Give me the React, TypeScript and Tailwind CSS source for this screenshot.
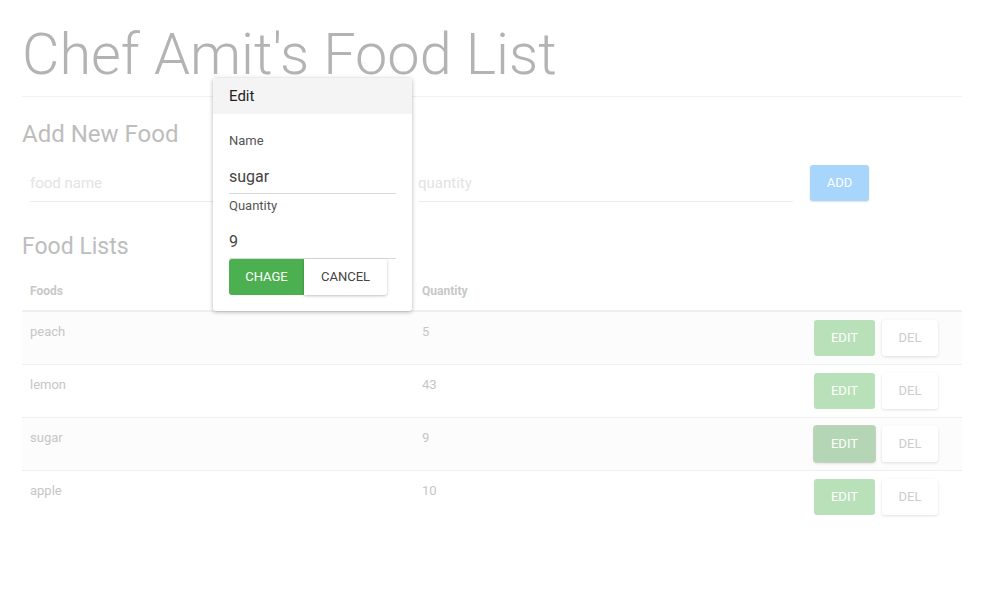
import React from "react";

const rows = [
  { name: "peach", qty: "5" },
  { name: "lemon", qty: "43" },
  { name: "sugar", qty: "9" },
  { name: "apple", qty: "10" },
];

export default function App() {
  return (
    <div className="relative w-[995px] h-[592px] bg-white overflow-hidden" style={{ fontFamily: "Roboto, 'Liberation Sans', sans-serif" }}>
      <div className="pl-[22px] w-[962px]">
        <h1 className="text-[57.6px] font-light text-[#b3b3b3] leading-none pt-[26px] pb-[12px] border-b border-[#f2f2f2]">Chef Amit's Food List</h1>
        <h2 className="text-[24px] text-[#bdbdbd] leading-none mt-[25px]">Add New Food</h2>
        <div className="flex items-end mt-[19px]">
          <div className="ml-[8px] w-[375px] h-[37px] border-b border-[#ececec] flex items-center pt-[1px] text-[15px] text-[#e3e3e3]">food name</div>
          <div className="ml-[13px] w-[375px] h-[37px] border-b border-[#ececec] flex items-center pt-[1px] text-[15px] text-[#e3e3e3]">quantity</div>
          <div className="ml-[17px] mb-[1px] w-[59px] h-[36px] rounded-[3px] bg-[#a7d5fb] text-white text-[13px] flex items-center justify-center shadow-[0_1px_2px_rgba(0,0,0,0.12)]">ADD</div>
        </div>
        <h2 className="text-[23px] text-[#bdbdbd] leading-none mt-[33px]">Food Lists</h2>
        <div className="mt-[22px]">
          <div className="flex h-[32px] border-b-2 border-[#f0f0f0] text-[12px] font-bold text-[#c8c8c8] items-start pt-[2px]">
            <div className="pl-[8px] w-[400px]">Foods</div>
            <div>Quantity</div>
          </div>
          {rows.map((r, i) => (
            <div key={r.name} className={`flex h-[53px] ${i < rows.length - 1 ? "border-b border-[#eeeeee]" : ""} ${i % 2 === 0 ? "bg-[#fcfcfc]" : "bg-white"}`}>
              <div className="pl-[8px] w-[400px] pt-[10px] text-[13px] text-[#c6c6c6]">{r.name}</div>
              <div className="flex-1 pt-[10px] text-[13px] text-[#c6c6c6]">{r.qty}</div>
              <div className="flex gap-[7px] pt-[8px] pr-[24px]">
                <div className={`w-[61px] h-[36px] rounded-[3px] text-white text-[13px] flex items-center justify-center ${i === 2 ? "bg-[#b4d6b4] shadow-[0_0_0_1px_#c7cfc7,0_1px_3px_rgba(0,0,0,0.2)]" : "bg-[#b8e1b9]"}`}>EDIT</div>
                <div className="w-[56px] h-[36px] rounded-[3px] bg-white text-[#cccccc] text-[13px] flex items-center justify-center shadow-[0_1px_3px_rgba(0,0,0,0.12)]">DEL</div>
              </div>
            </div>
          ))}
        </div>
      </div>

      <div className="absolute left-[213px] top-[78px] w-[199px] h-[233px] bg-white rounded-[3px] shadow-[0_1px_4px_rgba(0,0,0,0.3)] overflow-hidden">
        <div className="h-[36px] bg-[#f4f4f4] pl-[16px] flex items-center text-[15px] text-[#222]">Edit</div>
        <div className="px-[16px]">
          <div className="text-[13px] text-[#555] mt-[20px] leading-none">Name</div>
          <div className="h-[47px] border-b border-[#dadada] flex items-end pb-[7px] text-[16px] leading-[19px] text-[#444] w-[167px]">sugar</div>
          <div className="text-[13px] text-[#555] mt-[5px] leading-none">Quantity</div>
          <div className="h-[47px] border-b border-[#dadada] flex items-end pb-[7px] text-[16px] leading-[19px] text-[#444] w-[167px]">9</div>
          <div className="flex">
            <div className="w-[75px] h-[36px] bg-[#4caf50] text-white text-[13px] flex items-center justify-center rounded-l-[3px]">CHAGE</div>
            <div className="w-[83px] h-[36px] bg-white text-[#444] text-[13px] flex items-center justify-center rounded-r-[3px] shadow-[0_1px_3px_rgba(0,0,0,0.25)]">CANCEL</div>
          </div>
        </div>
      </div>
    </div>
  );
}
